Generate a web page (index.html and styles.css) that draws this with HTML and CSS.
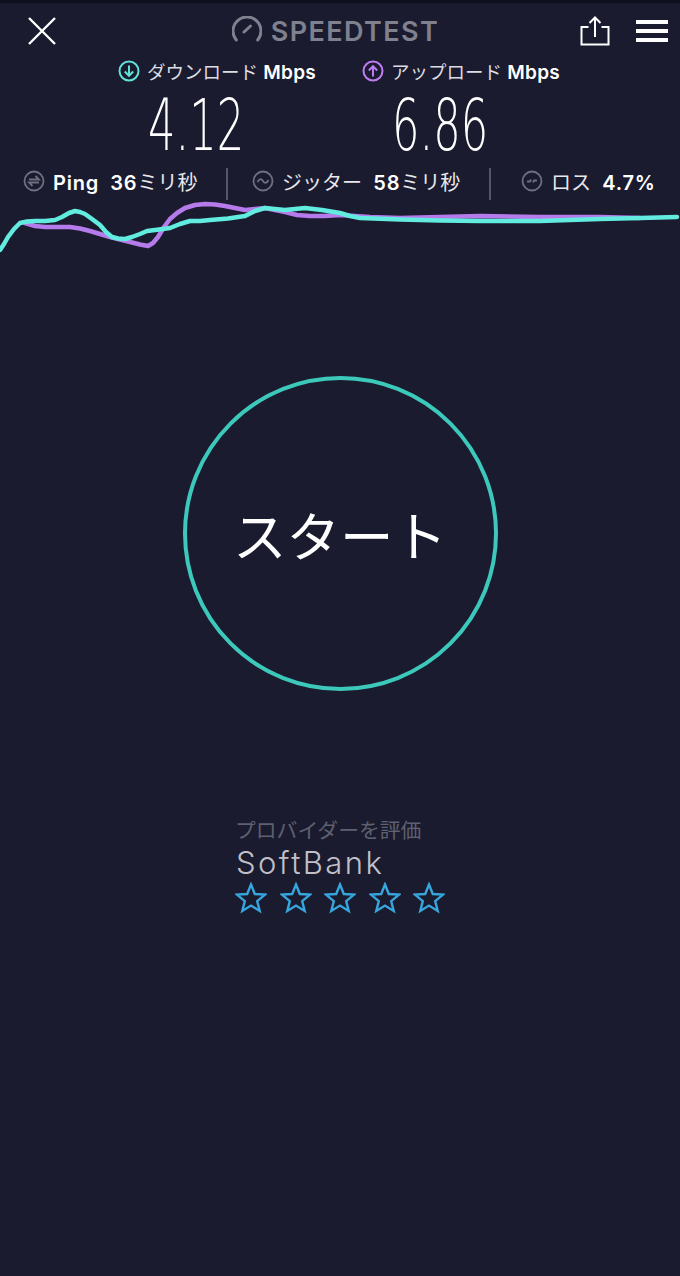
FILE: index.html
```html
<!DOCTYPE html>
<html lang="ja">
<head>
<meta charset="UTF-8">
<title>SPEEDTEST</title>
<link rel="stylesheet" href="styles.css">
</head>
<body>

<header class="topbar">
  <svg class="icon-close" width="30" height="30" viewBox="0 0 30 30"><path d="M2 2 L28 28 M28 2 L2 28" /></svg>
  <div class="brand">
    <svg width="30" height="28" viewBox="0 0 30 28"><path class="gauge" d="M4.300 24 A14 14 0 1 1 25.700 24" /><path class="gauge-hand" d="M12 16 L18.500 10" /></svg>
    <span>SPEEDTEST</span>
  </div>
  <div class="top-actions">
    <svg class="icon-share" width="30" height="30" viewBox="0 0 30 30"><path d="M8.500 11 L1.500 11 L1.500 28.500 L28.500 28.500 L28.500 11 L21.500 11 M15 21 L15 2 M9.500 7 L15 1.500 L20.500 7" /></svg>
    <div class="burger"><i></i><i></i><i></i></div>
  </div>
</header>

<section class="speeds">
  <div class="speed speed-down">
    <div class="speed-label">
      <svg width="22" height="22" viewBox="0 0 22 22"><circle cx="11" cy="11" r="9.500" /><path d="M11 5.500 V15.500 M6.800 11.500 L11 15.800 L15.200 11.500" /></svg>
      <span>ダウンロード <b>Mbps</b></span>
    </div>
    <div class="speed-value">4.12</div>
  </div>
  <div class="speed speed-up">
    <div class="speed-label">
      <svg width="22" height="22" viewBox="0 0 22 22"><circle cx="11" cy="11" r="9.500" /><path d="M11 16.500 V6.500 M6.800 10.500 L11 6.200 L15.200 10.500" /></svg>
      <span>アップロード <b>Mbps</b></span>
    </div>
    <div class="speed-value">6.86</div>
  </div>
</section>

<section class="stats">
  <div class="stat stat-ping">
    <svg width="22" height="22" viewBox="0 0 22 22"><circle cx="11" cy="11" r="9.500" /><path d="M6 9.500 H16 L12.500 6 M16 12.500 H6 L9.500 16" /></svg>
    <span><b>Ping</b>&nbsp; <b>36</b>ミリ秒</span>
  </div>
  <div class="stat-sep"></div>
  <div class="stat stat-jitter">
    <svg width="22" height="22" viewBox="0 0 22 22"><circle cx="11" cy="11" r="9.500" /><path d="M5.500 12 C7.500 8 9.500 8.500 11 11 C12.500 13.500 14.500 14 16.500 10" /></svg>
    <span>ジッター&nbsp; <b>58</b>ミリ秒</span>
  </div>
  <div class="stat-sep"></div>
  <div class="stat stat-loss">
    <svg width="22" height="22" viewBox="0 0 22 22"><circle cx="11" cy="11" r="9.500" /><path d="M6 11.500 H9 L10 9.500 M12 12.500 L13 10.500 H16" /></svg>
    <span>ロス&nbsp; <b>4.7%</b></span>
  </div>
</section>

<svg class="chart" width="680" height="64" viewBox="0 200 680 64">
  <polyline class="line-up" points="25,224 35,227 45,228 60,228 70,228 80,229.500 90,232 100,235 110,238 120,240.500 130,243 140,245.500 148,247 153,244 158,238 164,228 170,220 177,214 185,209 195,206 205,205 215,205.500 225,207 235,209 245,211 255,210 265,209 275,211 285,213 297,216 310,217 325,217 340,216 370,218 400,219 440,218 480,217 540,218 600,218 640,219" />
  <polyline class="line-down" points="0,251 4,245 8,238 14,230 20,224 27,222.500 35,222 45,222 55,221 62,218 69,214 75,212 80,213 85,215 92,220 100,226 106,233 112,238 118,239.500 125,240 132,238 140,235 147,232 155,231 163,230 170,229 180,225 190,222 200,222 210,221 228,219.500 245,217 255,212 265,209 275,210 285,211 295,210 305,209 322,211 340,214 350,217 360,219 400,220.500 440,221.500 480,222 540,222 600,220 640,219 677,218" />
</svg>

<div class="start-wrap">
  <div class="start-btn">スタート</div>
</div>

<section class="rating">
  <div class="rating-title">プロバイダーを評価</div>
  <div class="rating-isp">SoftBank</div>
  <div class="stars">
    <svg width="32" height="32" viewBox="0 0 32 32"><path d="M16 2.500 L19.800 12 L30 12.600 L22.200 19.100 L24.700 29 L16 23.600 L7.300 29 L9.800 19.100 L2 12.600 L12.200 12 Z" /></svg>
    <svg width="32" height="32" viewBox="0 0 32 32"><path d="M16 2.500 L19.800 12 L30 12.600 L22.200 19.100 L24.700 29 L16 23.600 L7.300 29 L9.800 19.100 L2 12.600 L12.200 12 Z" /></svg>
    <svg width="32" height="32" viewBox="0 0 32 32"><path d="M16 2.500 L19.800 12 L30 12.600 L22.200 19.100 L24.700 29 L16 23.600 L7.300 29 L9.800 19.100 L2 12.600 L12.200 12 Z" /></svg>
    <svg width="32" height="32" viewBox="0 0 32 32"><path d="M16 2.500 L19.800 12 L30 12.600 L22.200 19.100 L24.700 29 L16 23.600 L7.300 29 L9.800 19.100 L2 12.600 L12.200 12 Z" /></svg>
    <svg width="32" height="32" viewBox="0 0 32 32"><path d="M16 2.500 L19.800 12 L30 12.600 L22.200 19.100 L24.700 29 L16 23.600 L7.300 29 L9.800 19.100 L2 12.600 L12.200 12 Z" /></svg>
  </div>
</section>

</body>
</html>
```

FILE: styles.css
```css
* { box-sizing: border-box; margin: 0; padding: 0; }
html, body { height: 100%; }
body { background: #1a1b2e; color: #fff; font-family: Inter, "Noto Sans CJK JP", sans-serif; border-top: 3px solid #0e0f1e; overflow: hidden; }
svg { display: block; fill: none; }
b { font-weight: 600; }

.topbar { display: flex; justify-content: space-between; align-items: center; height: 56px; padding: 0 12px 0 27px; }
.icon-close path { stroke: #fff; stroke-width: 2.400; }
.brand { display: flex; align-items: center; gap: 9px; margin-left: 34px; color: #80818f; font-size: 27px; font-weight: 600; letter-spacing: 1.400px; }
.brand svg { margin-top: -2px; }
.gauge { stroke: #80818f; stroke-width: 3; stroke-linecap: round; }
.gauge-hand { stroke: #80818f; stroke-width: 3; stroke-linecap: round; }
.top-actions { display: flex; align-items: center; gap: 26px; }
.icon-share path { stroke: #fff; stroke-width: 2; }
.burger { display: flex; flex-direction: column; gap: 5px; width: 32px; }
.burger i { display: block; height: 4px; background: #fff; }

.speeds { display: flex; padding-left: 118px; }
.speed { width: 244px; }
.speed-label { display: flex; align-items: center; gap: 7px; height: 24px; font-size: 18.500px; color: #dcdde2; white-space: nowrap; }
.speed-label b { color: #fff; font-size: 19px; letter-spacing: 0.300px; }
.speed-label circle, .speed-label path { stroke-width: 2; }
.speed-down svg { stroke: #5fe3d8; }
.speed-up svg { stroke: #bf7cf0; }
.speed-value { width: 150px; text-align: center; font-family: "DejaVu Sans", sans-serif; font-weight: 200; font-size: 72px; line-height: 60px; margin-top: 12px; transform: scaleX(0.6); color: #fff; }

.stats { display: flex; align-items: center; height: 36px; margin-top: 8px; font-size: 20px; color: #e8e8ec; white-space: nowrap; }
.stat { display: flex; align-items: center; gap: 8px; }
.stat svg { stroke: #6e6f80; }
.stat circle, .stat path { stroke-width: 1.800; }
.stat b { color: #fff; letter-spacing: 0.800px; }
.stat-ping { margin-left: 23px; width: 203px; }
.stat-jitter { margin-left: 24px; width: 237px; }
.stat-loss { margin-left: 30px; }
.stat-sep { width: 2px; height: 32px; margin-top: 6px; background: #555667; }

.line-up, .line-down { stroke-width: 4.500; stroke-linejoin: round; stroke-linecap: round; }
.line-up { stroke: #b57bea; }
.line-down { stroke: #62ebdf; }

.start-wrap { display: flex; justify-content: center; margin-top: 113px; }
.start-btn { width: 315px; height: 315px; border: 4px solid #3cc9bb; border-radius: 50%; display: flex; align-items: center; justify-content: center; font-size: 53.500px; color: #fff; }

.rating { margin: 127px 0 0 236px; }
.rating-title { font-size: 20.800px; line-height: 26px; color: #5f6070; margin-left: -1px; }
.rating-isp { font-weight: 300; font-size: 31px; line-height: 38px; color: #c0c1c8; letter-spacing: 2.400px; }
.stars { display: flex; gap: 12.500px; margin-left: -1px; }
.stars svg path { stroke: #37a6dc; stroke-width: 2.400; }
```
